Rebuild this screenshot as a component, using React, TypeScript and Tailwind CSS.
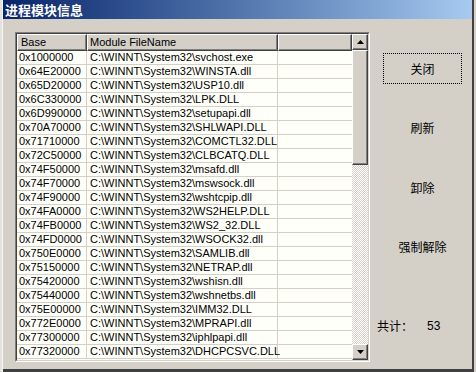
import React from 'react';

const modules: [string, string][] = [
  ['0x1000000', 'C:\\WINNT\\System32\\svchost.exe'],
  ['0x64E20000', 'C:\\WINNT\\System32\\WINSTA.dll'],
  ['0x65D20000', 'C:\\WINNT\\System32\\USP10.dll'],
  ['0x6C330000', 'C:\\WINNT\\System32\\LPK.DLL'],
  ['0x6D990000', 'C:\\WINNT\\System32\\setupapi.dll'],
  ['0x70A70000', 'C:\\WINNT\\System32\\SHLWAPI.DLL'],
  ['0x71710000', 'C:\\WINNT\\System32\\COMCTL32.DLL'],
  ['0x72C50000', 'C:\\WINNT\\System32\\CLBCATQ.DLL'],
  ['0x74F50000', 'C:\\WINNT\\System32\\msafd.dll'],
  ['0x74F70000', 'C:\\WINNT\\System32\\mswsock.dll'],
  ['0x74F90000', 'C:\\WINNT\\System32\\wshtcpip.dll'],
  ['0x74FA0000', 'C:\\WINNT\\System32\\WS2HELP.DLL'],
  ['0x74FB0000', 'C:\\WINNT\\System32\\WS2_32.DLL'],
  ['0x74FD0000', 'C:\\WINNT\\System32\\WSOCK32.dll'],
  ['0x750E0000', 'C:\\WINNT\\System32\\SAMLIB.dll'],
  ['0x75150000', 'C:\\WINNT\\System32\\NETRAP.dll'],
  ['0x75420000', 'C:\\WINNT\\System32\\wshisn.dll'],
  ['0x75440000', 'C:\\WINNT\\System32\\wshnetbs.dll'],
  ['0x75E00000', 'C:\\WINNT\\System32\\IMM32.DLL'],
  ['0x772E0000', 'C:\\WINNT\\System32\\MPRAPI.dll'],
  ['0x77300000', 'C:\\WINNT\\System32\\iphlpapi.dll'],
  ['0x77320000', 'C:\\WINNT\\System32\\DHCPCSVC.DLL'],
];

// 3D 버튼 테두리 (Win2000 스타일)
const raised =
  'border border-t-white border-l-white border-r-[#404040] border-b-[#404040] shadow-[inset_-1px_-1px_0_#808080]';

const ScrollButton: React.FC<{ down?: boolean }> = ({ down }) => (
  <div className={`w-[16px] h-[16px] shrink-0 bg-[#d4d0c8] flex items-center justify-center ${raised}`}>
    <svg width="7" height="4" viewBox="0 0 7 4">
      {down ? <polygon points="0,0 7,0 3.5,4" fill="#000" /> : <polygon points="0,4 7,4 3.5,0" fill="#000" />}
    </svg>
  </div>
);

export default function App() {
  return (
    <div
      className="w-[476px] h-[372px] bg-[#d4d0c8] flex overflow-hidden text-black"
      style={{ fontFamily: '"Liberation Sans", "Noto Sans CJK SC", sans-serif' }}
    >
      {/* 왼쪽 가장자리 */}
      <div className="w-[3px] h-full bg-[#e4e2dc] border-r border-[#f4f4f4]" />

      <div className="flex-1 flex flex-col border-b-[3px] border-b-[#404040]">
        {/* 타이틀 바 */}
        <div className="h-[19px] shrink-0 bg-gradient-to-r from-[#0a246a] to-[#a6caf0] flex items-center pl-[2px]">
          <span
            className="text-white font-bold text-[13px] leading-none"
            style={{ fontFamily: '"Noto Sans CJK SC", sans-serif' }}
          >
            进程模块信息
          </span>
        </div>

        <div className="flex-1 flex">
          {/* 리스트 */}
          <div className="ml-[12px] mt-[13px] w-[355px] h-[330px] border border-t-[#808080] border-l-[#808080] border-r-white border-b-white">
            <div className="w-full h-full border border-t-[#404040] border-l-[#404040] border-r-[#d4d0c8] border-b-[#d4d0c8] flex bg-[#fffffa] overflow-hidden">
              <div className="flex-1 flex flex-col text-[11px] overflow-hidden">
                {/* 헤더 */}
                <div className="flex h-[17px] shrink-0 bg-[#d4d0c8]">
                  <div className={`w-[70px] pl-[3px] flex items-center ${raised}`}>Base</div>
                  <div className={`w-[191px] pl-[2px] flex items-center ${raised}`}>Module FileName</div>
                  <div className={`flex-1 ${raised}`} />
                </div>
                {modules.map(([base, name]) => (
                  <div key={base} className="flex h-[14px] shrink-0 leading-[13px]">
                    <div className="w-[70px] shrink-0 pl-[2px] border-r border-b border-[#d4d0c8] whitespace-nowrap">{base}</div>
                    <div className="w-[191px] shrink-0 pl-[3px] border-r border-b border-[#d4d0c8] whitespace-nowrap">
                      {name}
                    </div>
                    <div className="flex-1 border-b border-[#d4d0c8]" />
                  </div>
                ))}
              </div>

              {/* 스크롤바 */}
              <div className="w-[16px] flex flex-col">
                <ScrollButton />
                <div className={`h-[115px] shrink-0 bg-[#d4d0c8] ${raised}`} />
                <div className="flex-1 bg-[repeating-conic-gradient(#ffffff_0_25%,#d4d0c8_0_50%)] bg-[length:2px_2px]" />
                <ScrollButton down />
              </div>
            </div>
          </div>

          {/* 버튼 영역 */}
          <div
            className="flex-1 flex flex-col items-center text-[12px]"
            style={{ fontFamily: '"Noto Sans CJK SC", sans-serif' }}
          >
            <div className="mt-[34px] ml-[3px] w-[79px] h-[31px] border border-dotted border-black flex items-center justify-center">
              关闭
            </div>
            <div className="mt-[36px] ml-[3px] h-[16px] leading-[16px]">刷新</div>
            <div className="mt-[44px] ml-[3px] h-[16px] leading-[16px]">卸除</div>
            <div className="mt-[43px] ml-[3px] h-[16px] leading-[16px]">强制解除</div>
            <div className="mt-[63px] self-start ml-[7px] flex items-center h-[16px]">
              <span>共计：</span>
              <span className="ml-[14px]" style={{ fontFamily: '"Liberation Sans", sans-serif' }}>
                53
              </span>
            </div>
          </div>
        </div>
      </div>

      {/* 오른쪽 가장자리 */}
      <div className="w-[4px] h-full bg-[#d4d0c8] border-l-2 border-[#404040]" />
    </div>
  );
}
